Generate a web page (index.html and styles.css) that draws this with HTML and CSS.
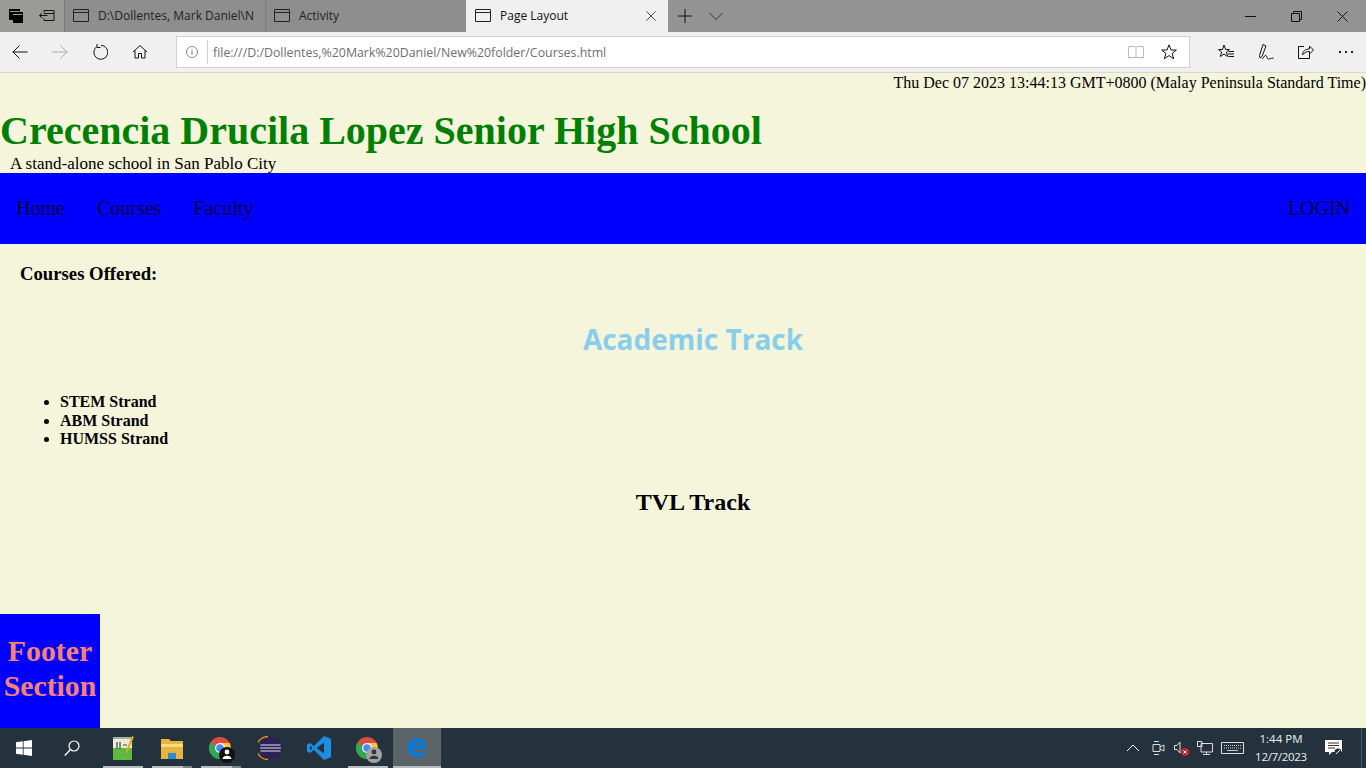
FILE: index.html
```html
<!DOCTYPE html>
<html lang="en">
<head>
<meta charset="utf-8">
<title>Page Layout</title>
<link rel="stylesheet" href="styles.css">
</head>
<body>
<div class="window">
  <div class="tabbar">
    <div class="tab-tools">
      <svg class="ic16" viewBox="0 0 16 16"><path d="M1 1h11v3h3v11H5v-3H1z" fill="#000"/><path d="M2 3.500h9.500M5 6.500h9.500" stroke="#999" fill="none"/></svg>
      <svg class="ic16" viewBox="0 0 16 16"><path d="M5 4.500V2.500h10v10H5v-2M0.500 7.500h8M3 5l-2.500 2.500L3 10M5 5.500h10" stroke="#111" fill="none"/></svg>
    </div>
    <div class="tab"><svg class="tabicon" viewBox="0 0 16 14"><path d="M.5.500h15v12H.5zM.5 3.500h15" stroke="#222" fill="none"/></svg><span class="tablabel">D:\Dollentes, Mark Daniel\N</span></div>
    <div class="tab tab2"><svg class="tabicon" viewBox="0 0 16 14"><path d="M.5.500h15v12H.5zM.5 3.500h15" stroke="#222" fill="none"/></svg><span class="tablabel">Activity</span></div>
    <div class="tab tab-active"><svg class="tabicon" viewBox="0 0 16 14"><path d="M.5.500h15v12H.5zM.5 3.500h15" stroke="#222" fill="none"/></svg><span class="tablabel">Page Layout</span><svg class="tabclose" viewBox="0 0 11 11"><path d="M.5.500l10 10M10.500.500l-10 10" stroke="#333" fill="none"/></svg></div>
    <div class="tab-new">
      <svg class="ic14" viewBox="0 0 14 14"><path d="M7 0v14M0 7h14" stroke="#111" fill="none"/></svg>
      <svg class="ic14" viewBox="0 0 14 14"><path d="M.5 4l6.500 6.500L13.500 4" stroke="#333" fill="none"/></svg>
    </div>
    <div class="winctl">
      <svg class="ic11" viewBox="0 0 11 11"><path d="M0 5.500h11" stroke="#111" fill="none"/></svg>
      <svg class="ic11" viewBox="0 0 11 11"><path d="M.5 2.500h8v8h-8zM2.500 2.500v-2h8v8h-2" stroke="#111" fill="none"/></svg>
      <svg class="ic11" viewBox="0 0 11 11"><path d="M.5.500l10 10M10.500.500l-10 10" stroke="#111" fill="none"/></svg>
    </div>
  </div>
  <div class="toolbar">
    <div class="nav-btns">
      <svg class="ic16" viewBox="0 0 16 16"><path d="M.5 8h15M7.500 1.500L1 8l6.500 6.500" stroke="#111" fill="none"/></svg>
      <svg class="ic16" viewBox="0 0 16 16"><path d="M.5 8h15M8.500 1.500L15 8l-6.500 6.500" stroke="#aaa" fill="none"/></svg>
      <svg class="ic16" viewBox="0 0 16 16"><path d="M4.500 2.800A7 7 0 1 0 9 1.300M5 0v3.500h3.500" stroke="#111" fill="none"/></svg>
      <svg class="ic16" viewBox="0 0 16 16"><path d="M1 8l7-6.500L15 8M3 6.500V14h3.500V9.500h3V14H13V6.500" stroke="#111" fill="none"/></svg>
    </div>
    <div class="addr">
      <svg class="info" viewBox="0 0 12 12"><circle cx="6" cy="6" r="5.500" stroke="#888" fill="none"/><path d="M6 5v4M6 3v1" stroke="#777" fill="none"/></svg>
      <span class="addr-sep"></span>
      <span class="url">file:///D:/Dollentes,%20Mark%20Daniel/New%20folder/Courses.html</span>
      <svg class="ic16 book" viewBox="0 0 16 16"><path d="M.5 2.500h6.500l1 1 1-1h6.500v11H.5zM8 3.500v10" stroke="#bbb" fill="none"/></svg>
      <svg class="ic16 star" viewBox="0 0 16 16"><path d="M8 .800l2 5.200h5.400l-4.300 3.400 1.600 5.400L8 11.600l-4.700 3.200 1.600-5.400L.600 6H6z" stroke="#111" fill="none"/></svg>
    </div>
    <div class="tool-btns">
      <svg class="ic16" viewBox="0 0 16 16"><path d="M6 1l1.600 4.500H11.500L8.500 8l1 4.500L6 10l-3.600 2.500 1.200-4.500L.500 5.500h4zM10.500 7.500h5.500M10 10h6M10.500 12.500h5.500" stroke="#111" fill="none"/></svg>
      <svg class="ic16" viewBox="0 0 16 16"><path d="M5 .500L8 2 4 12.500 2 14l-.5-2.500zM4 15c2-1 2.500-4.500 4-3.500 1 1 1 3.500 2.500 3.500 1 0 2-.5 5-1" stroke="#111" fill="none"/></svg>
      <svg class="ic16" viewBox="0 0 16 16"><path d="M6 2.500H.5v12h11V10M4.500 11c0-4 3-6 7-6V2l4 4-4 4V7.500c-3 0-5.500 1-7 3.500z" stroke="#111" fill="none"/></svg>
      <svg class="ic16" viewBox="0 0 16 16"><path d="M1 7h2v2H1zM7 7h2v2H7zM13 7h2v2h-2z" fill="#222"/></svg>
    </div>
  </div>
  <main class="page">
    <div class="clock">Thu Dec 07 2023 13:44:13 GMT+0800 (Malay Peninsula Standard Time)</div>
    <header class="masthead">
      <h1 class="title">Crecencia Drucila Lopez Senior High School</h1>
      <div class="tagline">A stand-alone school in San Pablo City</div>
    </header>
    <nav class="menu">
      <a class="menu-link">Home</a>
      <a class="menu-link">Courses</a>
      <a class="menu-link">Faculty</a>
      <a class="menu-link menu-login">LOGIN</a>
    </nav>
    <section class="content">
      <h3 class="offered">Courses Offered:</h3>
      <h2 class="track track-acad">Academic Track</h2>
      <ul class="strands">
        <li>STEM Strand</li>
        <li>ABM Strand</li>
        <li>HUMSS Strand</li>
      </ul>
      <h2 class="track track-tvl">TVL Track</h2>
    </section>
    <footer class="foot">Footer Section</footer>
  </main>
  <div class="taskbar">
    <svg class="winlogo" viewBox="0 0 16 16"><path d="M0 2.300l6.800-1v6.300H0zM7.600 1.200L16 0v7.600H7.600zM0 8.400h6.800v6.300l-6.800-1zM7.600 8.400H16V16l-8.400-1.200z" fill="#fff"/></svg>
    <svg class="search" viewBox="0 0 16 16"><circle cx="10" cy="6" r="5" stroke="#fff" fill="none" stroke-width="1.200"/><path d="M6.500 9.500L.8 15.500" stroke="#fff" stroke-width="1.300"/></svg>
    <div class="task-app on"><svg class="appic" viewBox="0 0 24 24"><path d="M2 1h19v23H2z" fill="#e8ecd8"/><path d="M2 12h19v12H2z" fill="#62b83f"/><path d="M2 1h19v2H2z" fill="#aab0a0"/><path d="M6 6v7M9 6v7M12 9h4" stroke="#444" stroke-width="1.200"/><path d="M23 1l-6 14-2 3 .2-4L21 0z" fill="#e2a52c"/></svg></div>
    <div class="task-app on split"><svg class="appic" viewBox="0 0 24 24"><path d="M1 3h8l2 2h12v18H1z" fill="#e8b33e"/><path d="M1 8h22v3H1z" fill="#fbdc7c"/><path d="M8 17h8v6H8z" fill="#2b8bd4"/></svg></div>
    <div class="task-app on split"><svg class="appic chrome" viewBox="0 0 26 26"><circle cx="11" cy="11" r="11" fill="#dd4b3e"/><path d="M11 11L1.500 5.500A11 11 0 0 0 11 22z" fill="#2da94f"/><path d="M11 6h9.500A11 11 0 0 1 11 22z" fill="#fcc934"/><circle cx="11" cy="11" r="5" fill="#fff"/><circle cx="11" cy="11" r="3.800" fill="#4a8af4"/><circle cx="18" cy="18" r="8" fill="#111"/><circle cx="18" cy="15" r="2.400" fill="#fff"/><path d="M13.500 22c0-4.500 9-4.500 9 0z" fill="#fff"/></svg></div>
    <div class="task-app"><svg class="appic" viewBox="0 0 24 24"><circle cx="12.500" cy="12" r="11.500" fill="#2c2255"/><path d="M2 12h21M2.500 9h20M2.500 15h20" stroke="#e8e4f2" stroke-width="1.200"/><path d="M10 .500A11.500 11.500 0 0 0 10 23.500" stroke="#f7941e" stroke-width="1.300" fill="none"/></svg></div>
    <div class="task-app"><svg class="appic" viewBox="0 0 24 24"><path d="M17 0l7 3v18l-7 3-10-10-4 3-3-1.500v-7L3 7l4 3z" fill="#1c8fe0"/><path d="M17 6.500v11L9.500 12z" fill="#23323c"/><path d="M3 9.500v5l2.500-2.500z" fill="#23323c"/></svg></div>
    <div class="task-app on"><svg class="appic chrome" viewBox="0 0 26 26"><circle cx="11" cy="11" r="11" fill="#dd4b3e"/><path d="M11 11L1.500 5.500A11 11 0 0 0 11 22z" fill="#2da94f"/><path d="M11 6h9.500A11 11 0 0 1 11 22z" fill="#fcc934"/><circle cx="11" cy="11" r="5" fill="#fff"/><circle cx="11" cy="11" r="3.800" fill="#4a8af4"/><circle cx="18" cy="18" r="8" fill="#a2a2a2"/><circle cx="18" cy="15" r="2.400" fill="#333"/><path d="M13.500 22c0-4.500 9-4.500 9 0z" fill="#333"/></svg></div>
    <div class="task-app on active"><svg class="appic edge" viewBox="0 0 24 24"><path d="M1 12C1 5 6 1 12.500 1 19 1 23 6 23 13.500H7.500c.5 5 8 6.500 14 3V22c-8 3.500-20.500 1.500-20.500-10zM7.500 9.500h9C16 5 8.500 5 7.500 9.500z" fill="#0a7ad9"/></svg></div>
    <div class="tray">
      <svg class="trayic gap9" viewBox="0 0 16 16"><path d="M2 11l6-6 6 6" stroke="#fff" fill="none"/></svg>
      <svg class="trayic gap7" viewBox="0 0 16 16"><path d="M3 4.500h7v7H3zM10 7l4-2v6l-4-2M4 1.500h5M4 14.500h5" stroke="#ddd" fill="none"/></svg>
      <svg class="trayic" viewBox="0 0 16 16"><path d="M1.500 5.500h2.500l3-3.500v11l-3-3.500H1.500z" stroke="#ddd" fill="none"/><circle cx="12" cy="12" r="4" fill="#c4262e"/><path d="M10.500 10.500l3 3M13.500 10.500l-3 3" stroke="#fff"/></svg>
      <svg class="trayic" viewBox="0 0 16 16"><path d="M4 3.500h11.500v8.500H4zM.5 1.500h4.500v5H.5zM9.500 12v2.500M6 14.500h7" stroke="#ddd" fill="none"/></svg>
      <svg class="kbd" viewBox="0 0 23 12"><path d="M.5.500h22v11H.5z" stroke="#ddd" fill="none"/><path d="M3 3.500h17M3 6h17" stroke="#ccc" stroke-dasharray="1 1"/><path d="M6 8.500h11" stroke="#ccc"/></svg>
      <div class="clocktray"><span>1:44 PM</span><span class="clockdate">12/7/2023</span></div>
      <svg class="notif" viewBox="0 0 17 17"><path d="M0 0h17v12H7l-3 3v-3H0z" fill="#fff"/><path d="M3 3h11M3 5.500h11M3 8h7" stroke="#333"/><circle cx="13" cy="12" r="3.500" fill="#23323c"/><path d="M11 14l4-4" stroke="#fff"/></svg>
      <span class="desktop-edge"></span>
    </div>
  </div>
</div>
</body>
</html>
```
FILE: styles.css
```css
* { box-sizing: border-box; }
html, body { margin: 0; height: 100%; overflow: hidden; }
body { font-family: "Liberation Serif", serif; }
.window { width: 1366px; height: 768px; display: flex; flex-direction: column; }
svg { display: block; flex: none; }
.ic16 { width: 16px; height: 16px; }
.ic14 { width: 14px; height: 14px; }
.ic11 { width: 11px; height: 11px; }

.tabbar { height: 32px; background: #939393; display: flex; align-items: stretch; font-family: "Open Sans", "Noto Sans", sans-serif; font-size: 12px; color: #222; }
.tab-tools { width: 65px; display: flex; align-items: center; gap: 15px; padding-left: 8px; border-right: 1px solid #7c7c7c; background: #9a9a96; }
.tab { width: 201px; display: flex; align-items: center; padding-left: 8px; border-right: 1px solid #7c7c7c; background: #8e8e8e; white-space: nowrap; overflow: hidden; }
.tab2 { width: 200px; border-right: 0; }
.tabicon { width: 16px; height: 14px; margin-right: 9px; }
.tablabel { overflow: hidden; flex: none; max-width: 158px; margin-top: -2px; }
.tab-active { width: 202px; background: #f0f0f0; color: #111; padding-left: 9px; border-right: 0; }
.tabclose { width: 10px; height: 10px; margin-left: auto; margin-right: 12px; }
.tab-new { display: flex; align-items: center; gap: 17px; padding-left: 10px; }
.winctl { margin-left: auto; display: flex; align-items: center; gap: 35px; padding-right: 18px; }

.toolbar { height: 41px; background: #f0f0f0; border-bottom: 1px solid #d8d8d0; display: flex; align-items: center; }
.nav-btns { width: 176px; display: flex; align-items: center; gap: 24px; padding-left: 12px; }
.addr { width: 1014px; height: 32px; background: #fff; border: 1px solid #d2d2d2; display: flex; align-items: center; }
.info { width: 12px; height: 12px; margin-left: 9px; }
.addr-sep { width: 1px; height: 24px; background: #cfcfcf; margin-left: 9px; }
.url { font-family: "Open Sans", "Noto Sans", sans-serif; font-size: 12.360px; color: #6f6f6f; margin-left: 5px; white-space: nowrap; }
.book { margin-left: auto; }
.star { margin-left: 17px; margin-right: 12px; }
.tool-btns { display: flex; align-items: center; gap: 24px; padding-left: 28px; }

.page { flex: 1; background: #f5f5dc; position: relative; min-height: 0; color: #000; }
.clock { text-align: right; font-size: 16px; line-height: 18px; padding-top: 1px; height: 19px; }
.masthead { height: 81px; padding-top: 16px; }
.title { margin: 0; font-size: 40px; line-height: 46px; color: #008000; font-weight: bold; }
.tagline { font-size: 17px; line-height: 18px; padding-left: 10px; margin-top: 1px; }
.menu { height: 71px; background: #0000ff; display: flex; align-items: center; gap: 32px; padding: 0 16px; }
.menu-link { font-size: 20px; color: #00003c; }
.menu-login { margin-left: auto; }
.content { padding: 0 0 0 20px; }
.offered { margin: 0; padding-top: 19px; font-size: 18.720px; line-height: 21px; }
.track { text-align: center; margin: 0; }
.track-acad { margin-top: 37px; font-family: "Open Sans", "Noto Sans", sans-serif; font-size: 28px; line-height: 36px; color: #87ceeb; }
.strands { margin: 36px 0 0; padding-left: 40px; font-weight: bold; font-size: 16px; line-height: 18.500px; }
.track-tvl { margin-top: 40.500px; font-size: 24px; line-height: 27px; }
.foot { position: absolute; left: 0; bottom: 0; width: 100px; height: 114px; background: #0000ff; color: #fa8072; font-size: 29.800px; font-weight: bold; text-align: center; line-height: 35px; padding-top: 19px; }

.taskbar { height: 40px; background: #23323c; display: flex; align-items: center; color: #fff; }
.winlogo { width: 16px; height: 16px; margin-left: 16px; }
.search { width: 16px; height: 16px; margin-left: 32px; margin-right: 18px; }
.task-app { width: 49px; height: 40px; display: flex; align-items: center; justify-content: center; position: relative; }
.task-app.on::after { content: ""; position: absolute; left: 5px; bottom: 0; width: 40px; height: 2px; background: #b8bcbf; }
.task-app.split::after { background: linear-gradient(to right, #b8bcbf 31px, #7c8489 31px); }
.task-app.active { background: #5b6569; width: 48px; margin-left: 1px; }
.task-app.active::after { left: 0; width: 48px; }
.appic { width: 24px; height: 24px; }
.chrome { width: 26px; height: 26px; margin-left: 3px; margin-top: 4px; }
.edge { width: 20px; height: 21px; margin-right: 0; margin-top: -2px; }
.tray { margin-left: auto; display: flex; align-items: center; padding-right: 4px; }
.trayic { width: 16px; height: 16px; margin-right: 8px; }
.gap9 { margin-right: 9px; }
.gap7 { margin-right: 7px; }
.kbd { width: 23px; height: 12px; }
.clocktray { display: flex; flex-direction: column; align-items: center; font-family: "Open Sans", "Noto Sans", sans-serif; font-size: 11.500px; line-height: 18px; width: 74px; margin-left: 0; color: #eef0f1; }
.clockdate { letter-spacing: -0.300px; }
.notif { width: 17px; height: 17px; margin-left: 7px; }
.desktop-edge { width: 1px; height: 40px; background: #4a565e; margin-left: 19px; }
```
